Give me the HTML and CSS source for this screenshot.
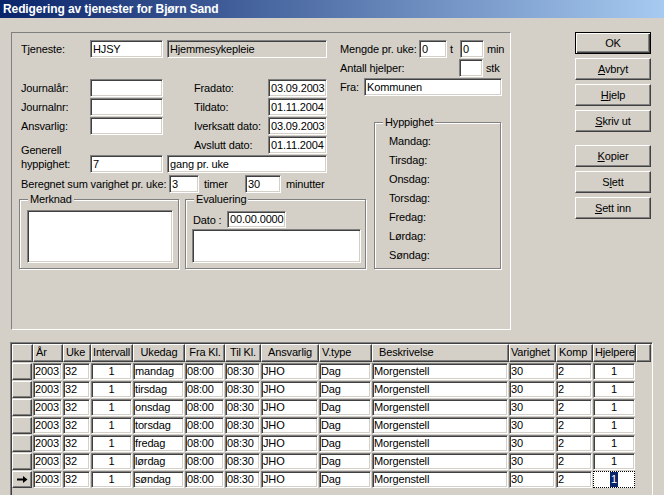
FILE: index.html
```html
<!DOCTYPE html>
<html lang="no">
<head>
<meta charset="utf-8">
<title>Redigering av tjenester</title>
<link rel="stylesheet" href="styles.css">
</head>
<body>
<div class="titlebar">Redigering av tjenester for Bjørn Sand</div>
<div class="upper">
  <div class="panel">
    <div class="lt">
      <div class="row tjen">
        <span class="lbl w69">Tjeneste:</span>
        <div class="edit w73">HJSY</div>
        <div class="edit ro w160 ml4">Hjemmesykepleie</div>
      </div>
      <div class="fields">
        <span class="lbl c1 r1">Journalår:</span><div class="edit c2 r1"></div>
        <span class="lbl c5 r1">Fradato:</span><div class="edit c6 r1">03.09.2003</div>
        <span class="lbl c1 r2">Journalnr:</span><div class="edit c2 r2"></div>
        <span class="lbl c5 r2">Tildato:</span><div class="edit c6 r2">01.11.2004</div>
        <span class="lbl c1 r3">Ansvarlig:</span><div class="edit c2 r3"></div>
        <span class="lbl c5 r3">Iverksatt dato:</span><div class="edit c6 r3">03.09.2003</div>
        <span class="lbl c5 r4">Avslutt dato:</span><div class="edit c6 r4">01.11.2004</div>
        <span class="lbl generell">Generell<br>hyppighet:</span>
        <div class="edit c2 r5">7</div>
        <div class="edit gang r5">gang pr. uke</div>
      </div>
      <div class="row bereg">
        <span class="lbl w148">Beregnet sum varighet pr. uke:</span>
        <div class="edit w30">3</div>
        <span class="lbl timer">timer</span>
        <div class="edit w36">30</div>
        <span class="lbl ml5">minutter</span>
      </div>
    </div>
    <div class="rt">
      <div class="rrow first">
        <span class="lbl w79">Mengde pr. uke:</span>
        <div class="edit w28">0</div>
        <span class="lbl tt">t</span>
        <div class="edit w24">0</div>
        <span class="lbl ml3">min</span>
      </div>
      <div class="rrow">
        <span class="lbl w119">Antall hjelper:</span>
        <div class="edit w24"></div>
        <span class="lbl ml3">stk</span>
      </div>
      <div class="rrow">
        <span class="lbl w24">Fra:</span>
        <div class="edit w138">Kommunen</div>
      </div>
    </div>
    <div class="hyp group">
      <span class="legend">Hyppighet</span>
      <div class="days">
        <div>Mandag:</div>
        <div>Tirsdag:</div>
        <div>Onsdag:</div>
        <div>Torsdag:</div>
        <div>Fredag:</div>
        <div>Lørdag:</div>
        <div>Søndag:</div>
      </div>
    </div>
    <div class="grp">
      <div class="group merknad">
        <span class="legend">Merknad</span>
        <div class="memo merk-memo"></div>
      </div>
      <div class="group evaluering">
        <span class="legend">Evaluering</span>
        <div class="dato">
          <span class="lbl w34">Dato :</span>
          <div class="edit w59 h17">00.00.0000</div>
        </div>
        <div class="memo eval-memo"></div>
      </div>
    </div>
  </div>
  <div class="buttons">
    <div class="btn default">OK</div>
    <div class="btn"><u>A</u>vbryt</div>
    <div class="btn"><u>H</u>jelp</div>
    <div class="btn"><u>S</u>kriv ut</div>
    <div class="btn sep"><u>K</u>opier</div>
    <div class="btn">S<u>l</u>ett</div>
    <div class="btn"><u>S</u>ett inn</div>
  </div>
</div>
<div class="dbgrid">
  <div class="grow ghead">
    <div class="hc"></div>
    <div class="hc">År</div>
    <div class="hc">Uke</div>
    <div class="hc tight">Intervall</div>
    <div class="hc ctr">Ukedag</div>
    <div class="hc ctr">Fra Kl.</div>
    <div class="hc ctr">Til Kl.</div>
    <div class="hc ctr">Ansvarlig</div>
    <div class="hc">V.type</div>
    <div class="hc besk">Beskrivelse</div>
    <div class="hc tight">Varighet</div>
    <div class="hc">Komp</div>
    <div class="hc tight">Hjelpere</div>
    <div class="hc"></div>
  </div>
  <div class="grow">
    <div class="ind"></div><div class="dc">2003</div><div class="dc">32</div><div class="dc ctr">1</div><div class="dc">mandag</div><div class="dc">08:00</div><div class="dc">08:30</div><div class="dc">JHO</div><div class="dc">Dag</div><div class="dc">Morgenstell</div><div class="dc">30</div><div class="dc">2</div><div class="dc ctr">1</div><div></div>
  </div>
  <div class="grow">
    <div class="ind"></div><div class="dc">2003</div><div class="dc">32</div><div class="dc ctr">1</div><div class="dc">tirsdag</div><div class="dc">08:00</div><div class="dc">08:30</div><div class="dc">JHO</div><div class="dc">Dag</div><div class="dc">Morgenstell</div><div class="dc">30</div><div class="dc">2</div><div class="dc ctr">1</div><div></div>
  </div>
  <div class="grow">
    <div class="ind"></div><div class="dc">2003</div><div class="dc">32</div><div class="dc ctr">1</div><div class="dc">onsdag</div><div class="dc">08:00</div><div class="dc">08:30</div><div class="dc">JHO</div><div class="dc">Dag</div><div class="dc">Morgenstell</div><div class="dc">30</div><div class="dc">2</div><div class="dc ctr">1</div><div></div>
  </div>
  <div class="grow">
    <div class="ind"></div><div class="dc">2003</div><div class="dc">32</div><div class="dc ctr">1</div><div class="dc">torsdag</div><div class="dc">08:00</div><div class="dc">08:30</div><div class="dc">JHO</div><div class="dc">Dag</div><div class="dc">Morgenstell</div><div class="dc">30</div><div class="dc">2</div><div class="dc ctr">1</div><div></div>
  </div>
  <div class="grow">
    <div class="ind"></div><div class="dc">2003</div><div class="dc">32</div><div class="dc ctr">1</div><div class="dc">fredag</div><div class="dc">08:00</div><div class="dc">08:30</div><div class="dc">JHO</div><div class="dc">Dag</div><div class="dc">Morgenstell</div><div class="dc">30</div><div class="dc">2</div><div class="dc ctr">1</div><div></div>
  </div>
  <div class="grow">
    <div class="ind"></div><div class="dc">2003</div><div class="dc">32</div><div class="dc ctr">1</div><div class="dc">lørdag</div><div class="dc">08:00</div><div class="dc">08:30</div><div class="dc">JHO</div><div class="dc">Dag</div><div class="dc">Morgenstell</div><div class="dc">30</div><div class="dc">2</div><div class="dc ctr">1</div><div></div>
  </div>
  <div class="grow">
    <div class="ind current"><svg width="11" height="9" viewBox="0 0 11 9"><rect x="0" y="3.5" width="7" height="2" fill="#000"/><polygon points="6,1 10.5,4.5 6,8" fill="#000"/></svg></div><div class="dc">2003</div><div class="dc">32</div><div class="dc ctr">1</div><div class="dc">søndag</div><div class="dc">08:00</div><div class="dc">08:30</div><div class="dc">JHO</div><div class="dc">Dag</div><div class="dc">Morgenstell</div><div class="dc">30</div><div class="dc">2</div><div class="dc focus"><span class="sel">1</span></div><div></div>
  </div>
</div>
</body>
</html>
```
FILE: styles.css
```css
* { box-sizing: border-box; }
html, body { margin: 0; padding: 0; }
body {
  width: 664px;
  height: 495px;
  overflow: hidden;
  background: #d4d0c8;
  font-family: "Liberation Sans", Arial, sans-serif;
  font-size: 11px;
  letter-spacing: -0.15px;
  color: #000;
}
.titlebar {
  height: 18px;
  line-height: 18px;
  padding-left: 3px;
  color: #fff;
  font-weight: bold;
  font-size: 12px;
  letter-spacing: -0.1px;
  background: linear-gradient(to right, #0a246a, #a6caf0);
  white-space: nowrap;
}
.upper { display: flex; margin-top: 14px; }
.panel {
  margin-left: 11px;
  width: 500px;
  height: 298px;
  border: 1px solid;
  border-color: #808080 #fff #fff #808080;
  display: grid;
  grid-template-columns: 328px 34px 1fr;
  grid-template-rows: 89px 77px 71px 1fr;
}
.lt { grid-column: 1; grid-row: 1 / 3; padding-left: 9px; }
.rt { grid-column: 2 / 4; grid-row: 1; }
.hyp { grid-column: 3; grid-row: 2 / 4; }
.grp { grid-column: 1 / 3; grid-row: 3; display: flex; align-items: flex-start; padding-left: 7px; gap: 6px; }

.row { display: flex; align-items: center; height: 18px; }
.tjen { margin-top: 7px; }
.bereg { margin-top: 2px; }
.lbl { white-space: nowrap; flex: none; }

.edit {
  flex: none;
  height: 18px;
  border: 1px solid;
  border-color: #808080 #fff #fff #808080;
  box-shadow: inset 1px 1px 0 #404040, inset -1px -1px 0 #d4d0c8;
  background: #fff;
  padding: 0 2px;
  line-height: 16px;
  white-space: nowrap;
  overflow: hidden;
}
.edit.ro { background: #d4d0c8; }
.h17 { height: 17px; line-height: 15px; }

.w24 { width: 24px; }
.w28 { width: 28px; }
.w30 { width: 30px; }
.w34 { width: 34px; }
.w36 { width: 36px; }
.w59 { width: 59px; }
.w69 { width: 69px; }
.w73 { width: 73px; }
.w79 { width: 79px; }
.w119 { width: 119px; }
.w138 { width: 138px; }
.w148 { width: 148px; }
.w160 { width: 160px; }
.ml3 { margin-left: 3px; }
.ml4 { margin-left: 4px; }
.ml5 { margin-left: 5px; }
.timer { margin-left: 5px; width: 41px; }
.tt { width: 13px; padding-left: 3px; }

.fields {
  margin-top: 21px;
  display: grid;
  grid-template-columns: 69px 73px 4px 27px 74px 59px;
  grid-template-rows: repeat(5, 18px);
  row-gap: 1px;
  align-items: center;
}
.c1 { grid-column: 1; }
.c2 { grid-column: 2; }
.c5 { grid-column: 5; }
.c6 { grid-column: 6; }
.r1 { grid-row: 1; }
.r2 { grid-row: 2; }
.r3 { grid-row: 3; }
.r4 { grid-row: 4; }
.r5 { grid-row: 5; }
.generell { grid-column: 1; grid-row: 4 / 6; align-self: end; line-height: 14px; padding-bottom: 2px; }
.gang { grid-column: 4 / 7; }

.rrow { display: flex; align-items: center; height: 18px; margin-top: 1px; }
.rrow.first { margin-top: 7px; }

.group {
  position: relative;
  border: 1px solid #808080;
  box-shadow: inset 1px 1px 0 #fff, 1px 1px 0 #fff;
}
.legend {
  position: absolute;
  top: -7px;
  left: 8px;
  padding: 0 2px;
  background: #d4d0c8;
  line-height: 13px;
  white-space: nowrap;
}
.hyp { width: 127px; height: 147px; }
.days { padding: 9px 0 0 14px; line-height: 19px; }

.merknad { width: 160px; height: 70px; }
.evaluering { width: 181px; height: 70px; }
.memo {
  background: #fff;
  border: 1px solid;
  border-color: #808080 #fff #fff #808080;
  box-shadow: inset 1px 1px 0 #404040, inset -1px -1px 0 #d4d0c8;
}
.merk-memo { margin: 10px 0 0 7px; width: 146px; height: 53px; }
.dato { display: flex; align-items: center; height: 17px; margin: 11px 0 0 7px; }
.eval-memo { margin: 1px 0 0 6px; width: 169px; height: 34px; }

.buttons { margin-left: 64px; width: 76px; display: flex; flex-direction: column; gap: 4px; }
.btn {
  height: 22px;
  line-height: 20px;
  text-align: center;
  border: 1px solid;
  border-color: #fff #404040 #404040 #fff;
  box-shadow: inset -1px -1px 0 #808080;
  white-space: nowrap;
}
.btn.default {
  border: 1px solid #000;
  box-shadow: inset 1px 1px 0 #fff, inset -1px -1px 0 #404040, inset -2px -2px 0 #808080;
}
.btn.sep { margin-top: 9px; }

.dbgrid {
  margin: 12px 0 0 10px;
  width: 643px;
  height: 170px;
  border: 1px solid;
  border-color: #808080 #fff #fff #808080;
  box-shadow: inset 1px 1px 0 #404040, inset -1px -1px 0 #d4d0c8;
  padding: 1px;
}
.grow {
  display: grid;
  grid-template-columns: 21px 30px 28px 42px 52px 40px 36px 58px 53px 137px 47px 37px 43px 15px;
  height: 18px;
}
.ghead { height: 19px; }
.hc {
  height: 18px;
  border-left: 1px solid #fff;
  border-top: 1px solid #fff;
  border-right: 1px solid #404040;
  border-bottom: 1px solid #404040;
  box-shadow: inset -1px -1px 0 #808080;
  padding-left: 2px;
  line-height: 15px;
  white-space: nowrap;
  overflow: hidden;
}
.hc.tight { padding-left: 1px; }
.hc.besk { padding-left: 6px; }
.hc.ctr { text-align: center; padding-left: 0; }
.ind {
  height: 17px;
  margin-right: 1px;
  border-left: 1px solid #fff;
  border-top: 1px solid #fff;
  border-right: 1px solid #404040;
  border-bottom: 1px solid #404040;
  box-shadow: inset -1px -1px 0 #808080;
  display: flex;
  align-items: center;
  justify-content: center;
}
.ind svg { display: block; }
.dc {
  height: 17px;
  margin-right: 1px;
  border: 1px solid;
  border-color: #808080 #fff #fff #808080;
  box-shadow: inset 1px 1px 0 #404040, inset -1px -1px 0 #d4d0c8;
  background: #fff;
  padding-left: 1px;
  line-height: 15px;
  white-space: nowrap;
  overflow: hidden;
}
.dc.ctr { text-align: center; padding-left: 0; }
.dc.focus {
  border: 1px dotted #000;
  box-shadow: none;
  text-align: center;
  padding-left: 0;
}
.sel { display: inline-block; background: #0a246a; color: #fff; padding: 0 1px; line-height: 15px; }
```
